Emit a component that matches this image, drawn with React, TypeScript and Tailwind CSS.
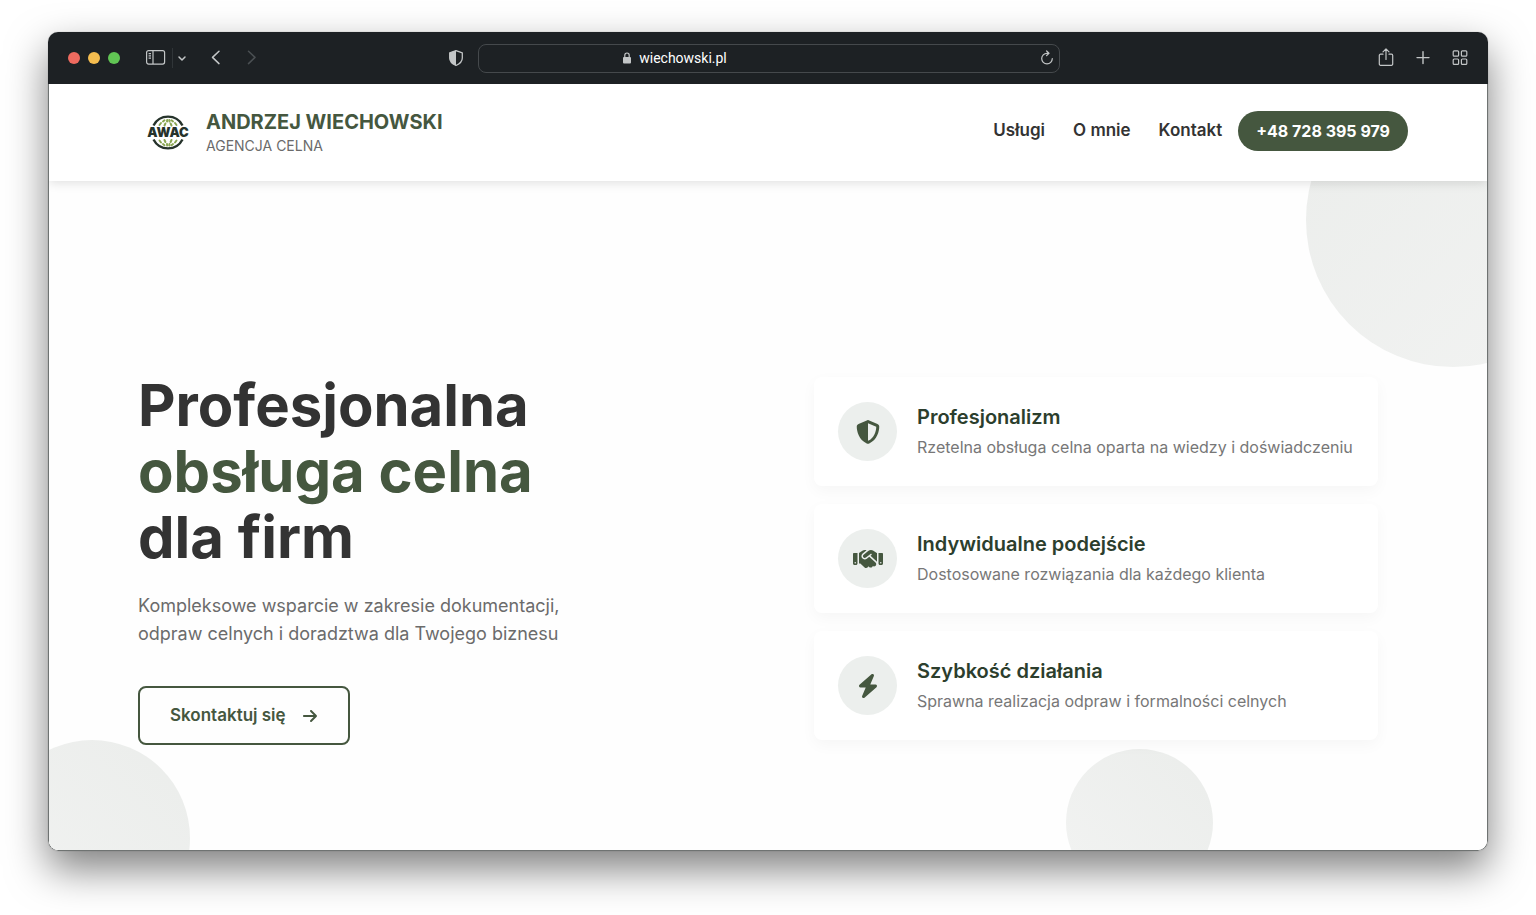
import { FaArrowRight, FaBolt, FaHandshake, FaShieldHalved } from "react-icons/fa6";
import type { IconType } from "react-icons";

interface Feature {
  icon: IconType;
  title: string;
  text: string;
  iconClass: string;
}

const features: Feature[] = [
  {
    icon: FaShieldHalved,
    title: "Profesjonalizm",
    text: "Rzetelna obsługa celna oparta na wiedzy i doświadczeniu",
    iconClass: "size-6",
  },
  {
    icon: FaHandshake,
    title: "Indywidualne podejście",
    text: "Dostosowane rozwiązania dla każdego klienta",
    iconClass: "h-6 w-[30px]",
  },
  {
    icon: FaBolt,
    title: "Szybkość działania",
    text: "Sprawna realizacja odpraw i formalności celnych",
    iconClass: "size-6",
  },
];

const navLinks = [
  { label: "Usługi", href: "#uslugi" },
  { label: "O mnie", href: "#o-mnie" },
  { label: "Kontakt", href: "#kontakt" },
];

function BrowserBar() {
  return (
    <div className="grid h-[52px] shrink-0 grid-cols-[1fr_auto_1fr] items-center bg-[#1d2124] pr-[18px] pl-5 text-[#c3c6c7]">
      <div className="flex items-center">
        <div className="flex gap-2">
          <span className="size-3 rounded-full bg-[#ee6a5f]" />
          <span className="size-3 rounded-full bg-[#f5bd4f]" />
          <span className="size-3 rounded-full bg-[#61c554]" />
        </div>
        <button type="button" aria-label="Sidebar" className="ml-6">
          <svg className="h-5 w-6" viewBox="0 0 24 20" fill="none" stroke="currentColor" strokeWidth="1.2">
            <rect x="2.6" y="2.6" width="18" height="13.5" rx="2" />
            <path d="M9 2.6v13.5M4.6 5.600h2.400M4.600 7.900h2.400M4.600 10.200h2.400" />
          </svg>
        </button>
        <span className="ml-1 h-5 w-px bg-[#303538]" />
        <button type="button" aria-label="Tab groups" className="ml-[3px]">
          <svg className="size-3" viewBox="0 0 12 12" fill="none" stroke="currentColor" strokeWidth="1.5" strokeLinecap="round" strokeLinejoin="round">
            <path d="M3 5l3 3 3-3" />
          </svg>
        </button>
        <button type="button" aria-label="Back" className="ml-5">
          <svg className="h-4 w-4" viewBox="0 0 16 16" fill="none" stroke="currentColor" strokeWidth="1.5" strokeLinecap="round" strokeLinejoin="round">
            <path d="M11 1.2L4.500 7.400l6.500 6.200" />
          </svg>
        </button>
        <button type="button" aria-label="Forward" className="ml-5 text-[#4a4f52]">
          <svg className="h-4 w-4" viewBox="0 0 16 16" fill="none" stroke="currentColor" strokeWidth="1.5" strokeLinecap="round" strokeLinejoin="round">
            <path d="M4.500 1.200L11 7.400l-6.500 6.200" />
          </svg>
        </button>
        <button type="button" aria-label="Privacy report" className="mr-3 ml-auto">
          <svg className="h-5 w-5" viewBox="0 0 20 20">
            <path d="M10 2.600L16.300 4.800v5.200c0 3.500-2.700 5.900-6.300 7.500-3.600-1.600-6.300-4-6.300-7.500V4.800z" fill="none" stroke="currentColor" strokeWidth="1.300" strokeLinejoin="round" />
            <path d="M10 2.600v14.900c-3.600-1.600-6.300-4-6.300-7.500V4.800z" fill="currentColor" />
          </svg>
        </button>
      </div>

      <div className="flex h-[29px] w-[582px] items-center rounded-lg border border-[#45494c] pr-1">
        <div className="flex flex-1 items-center justify-center pr-42 text-sm text-white">
          <div className="flex items-center gap-2">
            <svg className="h-3 w-2 text-[#c3c6c7]" viewBox="0 0 8 12">
              <rect x="0" y="5" width="8" height="6.500" rx="1" fill="currentColor" />
              <path d="M1.800 5.500V3.200a2.200 2.200 0 0 1 4.400 0v2.300" fill="none" stroke="currentColor" strokeWidth="1.200" />
            </svg>
            <span className="font-[Roboto,sans-serif]">wiechowski.pl</span>
          </div>
        </div>
        <button type="button" aria-label="Reload">
          <svg className="size-4" viewBox="0 0 16 16" fill="none" stroke="currentColor" strokeWidth="1.200" strokeLinecap="round" strokeLinejoin="round">
            <path d="M13.300 8.600A5.300 5.300 0 1 1 8 3.300h1.800M7.600 1l2.400 2.300-2.400 2.400" />
          </svg>
        </button>
      </div>

      <div className="flex items-center justify-end gap-[17px]">
        <button type="button" aria-label="Share">
          <svg className="h-5 w-5" viewBox="0 0 20 20" fill="none" stroke="currentColor" strokeWidth="1.200" strokeLinecap="round" strokeLinejoin="round">
            <path d="M7 6.200H4.500a1.200 1.200 0 0 0-1.200 1.200v8.700a1.200 1.200 0 0 0 1.200 1.200h11a1.200 1.200 0 0 0 1.200-1.200V7.400a1.200 1.200 0 0 0-1.200-1.200H13M10 11.500V1M7 3.800l3-3 3 3" />
          </svg>
        </button>
        <button type="button" aria-label="New tab">
          <svg className="h-5 w-5" viewBox="0 0 20 20" fill="none" stroke="currentColor" strokeWidth="1.400" strokeLinecap="round">
            <path d="M10 3.600v12M4 9.600h12" />
          </svg>
        </button>
        <button type="button" aria-label="Tab overview">
          <svg className="h-5 w-5" viewBox="0 0 20 20" fill="none" stroke="currentColor" strokeWidth="1.200">
            <rect x="3.200" y="2.800" width="5.400" height="5.400" rx="1" />
            <rect x="11.400" y="2.800" width="5.400" height="5.400" rx="1" />
            <rect x="3.200" y="11" width="5.400" height="5.400" rx="1" />
            <rect x="11.400" y="11" width="5.400" height="5.400" rx="1" />
          </svg>
        </button>
      </div>
    </div>
  );
}

function Logo() {
  return (
    <svg className="h-10 w-11" viewBox="0 0 44 40" fill="none">
      <path d="M7.500 12.500A16.300 16.300 0 0 1 36.500 12.500M7.500 26.500A16.300 16.300 0 0 0 36.500 26.500" stroke="#26332b" strokeWidth="2.400" />
      {/* Leaf strokes above and below the name */}
      <g stroke="#8aa652" strokeWidth="2" strokeLinecap="round">
        <path d="M13.500 12l1.500-2M17 8.500l1.500-1.200M18.500 12.500l.9-2M21 8.500l.2-1.500M30.500 12l-1.500-2M27 8.500l-1.500-1.200M25.500 12.500l-.9-2M23.500 8.500l-.2-1.500" />
        <path d="M13.500 27.500l1.500 2M17 31l1.500 1.200M18.500 27l.9 2M21 31l.2 1.500M30.500 27.500l-1.500 2M27 31l-1.500 1.200M25.500 27l-.9 2M23.500 31l-.2 1.500" />
      </g>
      <text
        x="22"
        y="24"
        textAnchor="middle"
        fontFamily="Inter, sans-serif"
        fontSize="13"
        fontWeight="900"
        fill="#26332b"
      >
        AWAC
      </text>
    </svg>
  );
}

function SiteHeader() {
  return (
    <header className="relative z-10 flex h-[97px] shrink-0 items-center justify-between bg-white pr-[79px] pl-[97px] shadow-[0_2px_10px_rgba(0,0,0,0.12)]">
      <a href="#top" className="flex items-center gap-4">
        <Logo />
        <span className="flex flex-col pt-0.5">
          <span className="text-xl leading-6 font-bold text-[#45573f]">ANDRZEJ WIECHOWSKI</span>
          <span className="text-sm leading-6 text-[#6b6b6b]">AGENCJA CELNA</span>
        </span>
      </a>
      <nav className="flex items-center gap-4 pb-1">
        <ul className="flex items-center gap-7">
          {navLinks.map((link) => (
            <li key={link.href}>
              <a href={link.href} className="text-[17px] font-semibold text-[#333]">
                {link.label}
              </a>
            </li>
          ))}
        </ul>
        <a
          href="tel:+48728395979"
          className="flex h-10 items-center rounded-full bg-[#45573f] px-[18px] text-base font-bold text-white"
        >
          +48 728 395 979
        </a>
      </nav>
    </header>
  );
}

function FeatureCard({ icon: Icon, title, text, iconClass }: Feature) {
  return (
    <li className="flex items-center gap-5 rounded-lg bg-white px-6 py-[25px] shadow-[0_5px_15px_rgba(0,0,0,0.035)]">
      <span className="flex size-[59px] shrink-0 items-center justify-center rounded-full bg-[#ecefed]">
        <Icon className={`text-[#45573f] ${iconClass}`} />
      </span>
      <div className="flex flex-col gap-0.5">
        <h3 className="text-xl leading-7 font-semibold text-[#2c3e2d]">{title}</h3>
        <p className="text-base leading-7 text-[#777]">{text}</p>
      </div>
    </li>
  );
}

function Hero() {
  return (
    <main className="relative flex-1 overflow-hidden bg-[#fefefe] px-[89px] pt-[191px]">
      {/* Background circles */}
      <span className="absolute -top-[108px] -right-[113px] size-[294px] rounded-full bg-linear-135 from-[#ebedeb] to-[#f2f3f2]" />
      <span className="absolute -bottom-[86px] -left-[55px] size-[196px] rounded-full bg-linear-45 from-[#f2f3f2] to-[#ebedeb]" />
      <span className="absolute right-[274px] -bottom-[46px] size-[147px] rounded-full bg-linear-45 from-[#f2f3f2] to-[#ebedeb]" />

      <div className="relative flex items-center justify-between gap-10 pr-5">
        <div>
          <h1 className="text-[58px] leading-[66px] font-bold text-[#333]">
            Profesjonalna
            <span className="block text-[#45573f]">obsługa celna</span>
            dla firm
          </h1>
          <p className="mt-[22px] text-lg leading-7 text-[#6b6b6b]">
            Kompleksowe wsparcie w zakresie dokumentacji,
            <br />
            odpraw celnych i doradztwa dla Twojego biznesu
          </p>
          <a
            href="#kontakt"
            className="mt-[38px] inline-flex h-[59px] items-center gap-4 rounded-lg border-2 border-[#45573f] px-[30px] text-[17px] font-semibold text-[#45573f]"
          >
            Skontaktuj się
            <FaArrowRight className="size-4" />
          </a>
        </div>
        <ul className="flex w-[564px] flex-col gap-[18px]">
          {features.map((feature) => (
            <FeatureCard key={feature.title} {...feature} />
          ))}
        </ul>
      </div>
    </main>
  );
}

export default function App() {
  return (
    <div className="flex min-h-screen bg-white px-12 pt-8 pb-16 font-[Inter,sans-serif]">
      <div className="flex min-w-0 flex-1 flex-col overflow-hidden rounded-[10px] shadow-[0_0_1px_rgba(0,0,0,0.4),0_18px_40px_rgba(0,0,0,0.5)]">
        <BrowserBar />
        <div className="flex flex-1 flex-col overflow-hidden rounded-b-[10px] border-x border-b border-[#6f7372]">
          <SiteHeader />
          <Hero />
        </div>
      </div>
    </div>
  );
}
